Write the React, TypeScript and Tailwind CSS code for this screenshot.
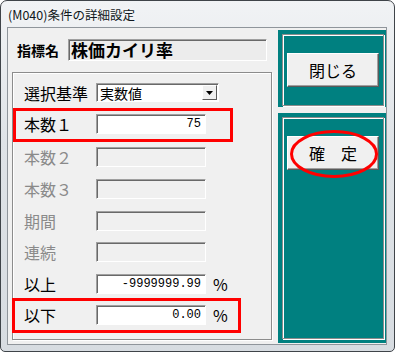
const jp = "font-['Noto_Sans_CJK_JP','Noto_Sans',sans-serif]";

const sunken =
  "border border-t-[#a0a0a0] border-l-[#a0a0a0] border-r-white border-b-white shadow-[inset_1px_1px_0_#696969]";

const etched = "border border-[#8c8c8c] shadow-[1px_1px_0_#fff,inset_1px_1px_0_#fff]";

function RaisedButton({ label }: { label: string }) {
  return (
    <div
      className={`flex h-[34px] w-[92px] items-center justify-center border border-t-white border-l-white border-r-[#5a5a5a] border-b-[#5a5a5a] bg-[#f0f0f0] text-[16px] text-black shadow-[inset_-1px_-1px_0_#a0a0a0] ${jp}`}
    >
      {label}
    </div>
  );
}

function TextBox({ value, disabled }: { value?: string; disabled?: boolean }) {
  return (
    <div
      className={`flex h-[20px] w-[110px] items-center justify-end pr-[4px] font-['Liberation_Mono',monospace] text-[12px] leading-none text-black ${sunken} ${
        disabled ? "bg-[#f0f0f0]" : "bg-white"
      }`}
    >
      {value}
    </div>
  );
}

type Row = { label: string; h: number; value?: string; disabled?: boolean; pct?: boolean };

const rows: Row[] = [
  { label: "本数１", h: 32, value: "75" },
  { label: "本数２", h: 33, disabled: true },
  { label: "本数３", h: 32, disabled: true },
  { label: "期間", h: 31, disabled: true },
  { label: "連続", h: 32, disabled: true },
  { label: "以上", h: 31, value: "-9999999.99", pct: true },
  { label: "以下", h: 32, value: "0.00", pct: true },
];

function TealPanel({ h, pb, children }: { h: number; pb: string; children: React.ReactNode }) {
  return (
    <div className={`flex bg-[#008080] pt-[4px] pl-[4px] pr-[2px] ${pb}`} style={{ height: h }}>
      <div className={`flex flex-1 justify-center pt-[18px] ${etched}`}>{children}</div>
    </div>
  );
}

export default function App() {
  return (
    <div className="relative h-[352px] w-[395px] overflow-hidden bg-white">
      <div className="flex h-full w-full flex-col rounded-t-[7px] rounded-b-[5px] border border-[#3f4449] bg-[linear-gradient(180deg,#f1f3f5_0%,#dfe3e7_40%,#d7dce1_100%)] pl-[6px] pr-[7px] pb-[6px]">
        {/* title bar */}
        <div className={`flex h-[26px] items-center pl-[1px] pt-[2px] text-[12.5px] text-[#101820] [text-shadow:0_0_6px_#fff] ${jp}`}>
          (M040)条件の詳細設定
        </div>

        {/* client area */}
        <div className="flex flex-1 border border-[#8f959b] bg-[#f0f0f0]">
          {/* left column */}
          <div className={`flex w-[270px] flex-col pt-[11px] ${jp}`}>
            <div className="flex h-[22px] items-center">
              <div className="w-[60px] pl-[9px] text-[14px] font-bold text-black">指標名</div>
              <div className={`flex h-[22px] w-[199px] items-center bg-[#ececec] pl-[2px] text-[17px] font-bold text-black ${sunken}`}>
                株価カイリ率
              </div>
            </div>

            <div className={`mt-[11px] ml-[4px] flex h-[268px] w-[260px] flex-col pt-[4px] ${etched}`}>
              <div className="flex h-[31px] items-center pl-[11px]">
                <div className="w-[72px] text-[16px] text-black">選択基準</div>
                <div className={`flex h-[19px] w-[123px] items-center bg-white pl-[3px] pr-[1px] ${sunken}`}>
                  <span className="flex-1 text-[14px] leading-none text-black">実数値</span>
                  <div className="flex h-[15px] w-[15px] items-center justify-center border border-t-white border-l-white border-r-[#5a5a5a] border-b-[#5a5a5a] bg-[#f0f0f0]">
                    <svg width="7" height="4" viewBox="0 0 7 4">
                      <polygon points="0,0 7,0 3.5,4" fill="#000" />
                    </svg>
                  </div>
                </div>
              </div>

              {rows.map((r) => (
                <div key={r.label} className="flex items-center pl-[11px]" style={{ height: r.h }}>
                  <div className={`w-[72px] text-[16px] ${r.disabled ? "text-[#8a8a8a]" : "text-black"}`}>
                    {r.label}
                  </div>
                  <TextBox value={r.value} disabled={r.disabled} />
                  {r.pct && <span className="ml-[7px] text-[16px] text-black">%</span>}
                </div>
              ))}
            </div>
          </div>

          {/* right column */}
          <div className="flex w-[108px] flex-col pt-[2px]">
            <TealPanel h={77} pb="pb-[1px]">
              <RaisedButton label="閉じる" />
            </TealPanel>
            <div className="h-[6px]" />
            <TealPanel h={230} pb="pb-[4px]">
              <RaisedButton label="確　定" />
            </TealPanel>
          </div>
        </div>
      </div>

      {/* red annotations */}
      <div className="pointer-events-none absolute left-[13px] top-[108px] h-[34px] w-[220px] border-[3px] border-[#ff0000]" />
      <div className="pointer-events-none absolute left-[12px] top-[298px] h-[35px] w-[229px] border-[3px] border-[#ff0000]" />
      <svg className="pointer-events-none absolute left-[290px] top-[130px]" width="88" height="48" viewBox="0 0 88 48">
        <ellipse cx="44" cy="24" rx="42.5" ry="22.5" fill="none" stroke="#ff0000" strokeWidth="3" />
      </svg>
    </div>
  );
}
